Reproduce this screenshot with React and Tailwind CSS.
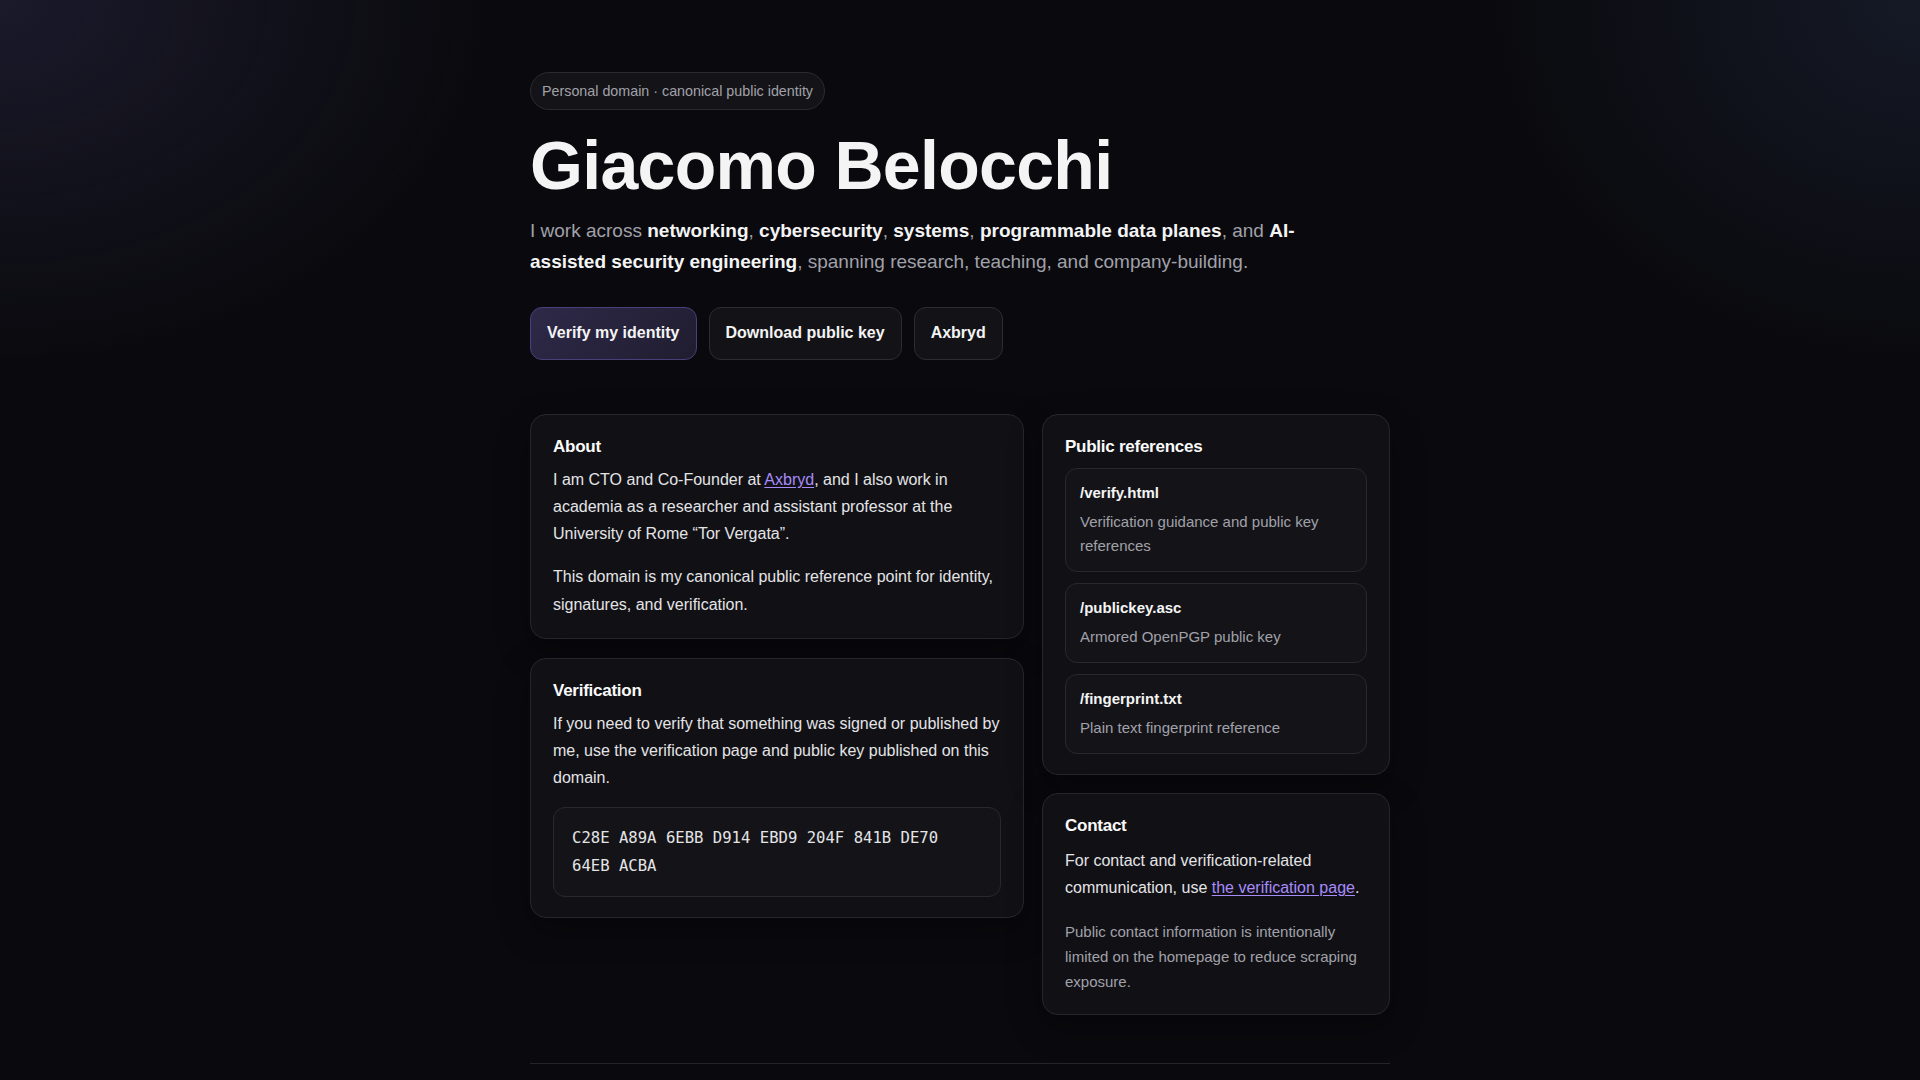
import React from "react";

function Card({ title, children, className = "" }) {
  return (
    <section
      className={
        "rounded-2xl border border-[#26262d] bg-[#111115] px-[22px] py-5 shadow-[0_12px_32px_rgba(0,0,0,0.35)] " +
        className
      }
    >
      <h2 className="text-[17px] font-bold leading-[23px] tracking-[-0.015em] text-[#fafafa]">{title}</h2>
      {children}
    </section>
  );
}

function RefItem({ path, desc }) {
  return (
    <div className="rounded-xl border border-[#28282f] bg-[#141418] px-[14px] py-[13px]">
      <div className="text-[15px] font-bold leading-[22px] text-[#f4f4f5]">{path}</div>
      <div className="mt-1.5 text-[15px] leading-6 text-[#a1a1aa]">{desc}</div>
    </div>
  );
}

export default function App() {
  return (
    <div className="min-h-screen bg-[#0a0a0e] bg-[radial-gradient(ellipse_700px_520px_at_0%_0%,rgba(40,38,66,0.55),transparent_70%),radial-gradient(ellipse_620px_520px_at_100%_0%,rgba(30,38,58,0.55),transparent_70%)] font-['Liberation_Sans',Arial,sans-serif] text-[#e4e4e7]">
      <main className="mx-auto w-[860px] pb-16 pt-[72px]">
        <div className="flex">
          <span className="rounded-full border border-[#2a2a31] bg-[#141418] px-[11px] py-2 text-[14.3px] leading-5 text-[#a1a1aa]">
            Personal domain · canonical public identity
          </span>
        </div>

        <h1 className="mt-5 text-[68px] font-bold leading-[1.05] tracking-[-0.01em] text-[#f4f4f5]">
          Giacomo Belocchi
        </h1>

        <p className="mt-[15px] max-w-[780px] text-[19px] leading-[1.62] text-[#a1a1aa]">
          I work across <strong className="font-bold text-[#f4f4f5]">networking</strong>,{" "}
          <strong className="font-bold text-[#f4f4f5]">cybersecurity</strong>,{" "}
          <strong className="font-bold text-[#f4f4f5]">systems</strong>,{" "}
          <strong className="font-bold text-[#f4f4f5]">programmable data planes</strong>, and{" "}
          <strong className="font-bold text-[#f4f4f5]">AI-assisted security engineering</strong>, spanning
          research, teaching, and company-building.
        </p>

        <div className="mt-[29px] flex gap-3">
          <a className="flex h-[53px] items-center rounded-xl border border-[#4a3f7a] bg-[linear-gradient(135deg,#2e2948,#201d30)] px-4 text-base font-bold text-[#f4f4f5]">
            Verify my identity
          </a>
          <a className="flex h-[53px] items-center rounded-xl border border-[#2c2c33] bg-[#131317] px-4 text-base font-bold text-[#f4f4f5]">
            Download public key
          </a>
          <a className="flex h-[53px] items-center rounded-xl border border-[#2c2c33] bg-[#131317] px-4 text-base font-bold text-[#f4f4f5]">
            Axbryd
          </a>
        </div>

        <div className="mt-[54px] grid grid-cols-[494px_348px] items-start gap-x-[18px]">
          <div className="flex flex-col gap-[19px]">
            <Card title="About">
              <p className="mt-2 text-base leading-[1.7]">
                I am CTO and Co-Founder at{" "}
                <a className="text-[#a78bfa] underline underline-offset-2">Axbryd</a>, and I also work in
                academia as a researcher and assistant professor at the University of Rome “Tor Vergata”.
              </p>
              <p className="mt-4 text-base leading-[1.7]">
                This domain is my canonical public reference point for identity, signatures, and verification.
              </p>
            </Card>

            <Card title="Verification">
              <p className="mt-2 text-base leading-[1.7]">
                If you need to verify that something was signed or published by me, use the verification page
                and public key published on this domain.
              </p>
              <div className="mt-4 rounded-xl border border-[#28282f] bg-[#141418] px-[18px] py-4 font-['DejaVu_Sans_Mono',monospace] text-[15.6px] leading-7 text-[#e4e4e7]">
                C28E A89A 6EBB D914 EBD9 204F 841B DE70 64EB ACBA
              </div>
            </Card>
          </div>

          <div className="flex flex-col gap-[18px]">
            <Card title="Public references">
              <div className="mt-2.5 flex flex-col gap-[11px]">
                <RefItem path="/verify.html" desc="Verification guidance and public key references" />
                <RefItem path="/publickey.asc" desc="Armored OpenPGP public key" />
                <RefItem path="/fingerprint.txt" desc="Plain text fingerprint reference" />
              </div>
            </Card>

            <Card title="Contact">
              <p className="mt-2.5 text-base leading-[1.7]">
                For contact and verification-related communication, use{" "}
                <a className="text-[#a78bfa] underline underline-offset-2">the verification page</a>.
              </p>
              <p className="mt-[18px] text-[15px] leading-[1.67] text-[#a1a1aa]">
                Public contact information is intentionally limited on the homepage to reduce scraping exposure.
              </p>
            </Card>
          </div>
        </div>

        <footer className="mt-12 h-16 border-t border-[#24242a]"></footer>
      </main>
    </div>
  );
}
